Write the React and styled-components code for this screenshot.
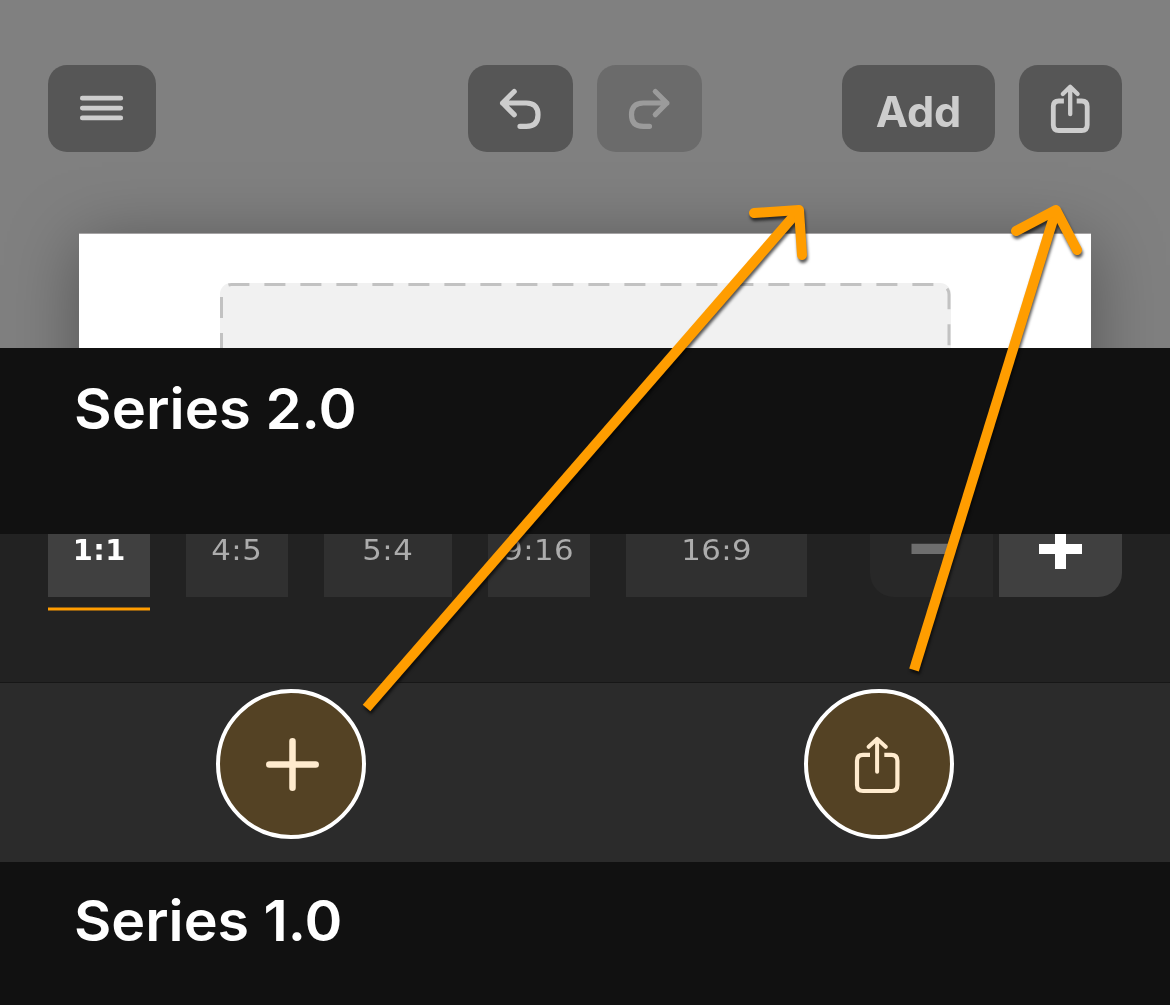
import React from "react";
import styled, { createGlobalStyle } from "styled-components";

const GlobalStyle = createGlobalStyle`
  * { box-sizing: border-box; }
  body { margin: 0; background: #111; }
  button { border: 0; padding: 0; margin: 0; }
`;

const Screen = styled.main`
  position: relative;
  display: flex;
  flex-direction: column;
  width: 1170px;
  height: 1005px;
  overflow: hidden;
  font-family: Inter, "Liberation Sans", sans-serif;
`;

const Editor = styled.section`
  display: flex;
  flex-direction: column;
  align-items: center;
  height: 348px;
  flex: none;
  overflow: hidden;
  padding-top: 65px;
  background: #808080;
`;

const Toolbar = styled.header`
  display: grid;
  grid-template-columns: 1fr auto 1fr;
  width: 100%;
  padding: 0 48px;
  margin-bottom: 81px;
`;

const Group = styled.div`
  display: flex;
  gap: 24px;
  justify-content: ${(p) => p.$align || "flex-start"};
`;

const ToolButton = styled.button`
  display: flex;
  align-items: center;
  justify-content: center;
  width: ${(p) => p.$width}px;
  height: 87px;
  border-radius: 19px;
  background: ${(p) => (p.disabled ? "#6b6b6b" : "#565656")};
  color: ${(p) => (p.disabled ? "#9b9b9b" : "#cdcdcd")};
  svg { display: block; }
`;

const AddLabel = styled.span`
  font: 700 42px/50px Inter, sans-serif;
  letter-spacing: -0.1px;
  padding-top: 7px;
  transform: scaleX(1.03);
`;

const Paper = styled.div`
  display: flex;
  justify-content: center;
  width: 1012px;
  height: 600px;
  flex: none;
  padding-top: 49px;
  border-top: 1px solid #a5a3a4;
  background: #fff;
  box-shadow: 0 9px 66px rgba(0, 0, 0, 0.35);
`;

const DropZone = styled.div`
  width: 731px;
  height: 300px;
  border-radius: 11px;
  background: #f1f1f1;
  svg { display: block; }
`;

const Caption = styled.h2`
  flex: none;
  height: ${(p) => p.$height}px;
  margin: 0;
  padding: ${(p) => p.$top}px 0 0 74px;
  background: #111;
  color: #fff;
  font: 600 56px/70px Inter, sans-serif;
`;

const CaptionText = styled.span`
  display: inline-block;
  transform: scaleX(${(p) => p.$stretch});
  transform-origin: left;
`;

const RatioBar = styled.section`
  display: flex;
  justify-content: space-between;
  height: 149px;
  flex: none;
  padding: 0 48px;
  border-bottom: 1px solid #171717;
  background: #222;
`;

const RatioList = styled.div`
  display: flex;
  gap: 36px;
`;

const RatioItem = styled.div`
  display: flex;
  flex-direction: column;
  gap: 10px;
  width: ${(p) => p.$width}px;
`;

const Ratio = styled.button`
  height: 63px;
  padding-bottom: 30px;
  background: ${(p) => (p.$active ? "#404040" : "#303030")};
  color: ${(p) => (p.$active ? "#fff" : "#acacac")};
  font: ${(p) => (p.$active ? 700 : 400)} 27.5px/33px "DejaVu Sans", sans-serif;
`;

const RatioLabel = styled.span`
  display: inline-block;
  letter-spacing: 0.4px;
  transform: scaleX(${(p) => (p.$active ? 1.05 : 1.12)});
`;

const Underline = styled.div`
  height: 4px;
  border: solid #915f12;
  border-width: 1px 0;
  background: #ff9d00;
`;

const Stepper = styled.div`
  display: flex;
  gap: 6px;
`;

const Step = styled.button`
  width: 123px;
  height: 63px;
  border-radius: ${(p) => (p.$right ? "0 0 24px 0" : "0 0 0 24px")};
  background: ${(p) => (p.$right ? "#404040" : "#282828")};
  color: ${(p) => (p.$right ? "#fff" : "#6e6e6e")};
  svg { display: block; }
`;

const Dock = styled.nav`
  display: flex;
  gap: 438px;
  height: 179px;
  flex: none;
  padding: 6px 216px 0;
  background: #2b2b2b;
`;

const RoundButton = styled.button`
  width: 150px;
  height: 150px;
  border: 4px solid #fff;
  border-radius: 50%;
  background: #544224;
  color: #ffebce;
  svg { display: block; }
`;

const Annotations = styled.svg`
  position: absolute;
  inset: 0;
  pointer-events: none;
  filter: drop-shadow(1px 3px 1.5px rgba(0, 0, 0, 0.65));
`;

const line = {
  fill: "none",
  stroke: "currentColor",
  strokeLinecap: "round",
  strokeLinejoin: "round",
};

const UndoIcon = () => (
  <svg width="105" height="87" {...line} strokeWidth="5.2">
    <path d="M46.2 26.5L34.6 38L46.2 49.7M34.6 38H58.2Q70 38.2 70 49.7Q70 61.3 58.2 61.3H52" />
  </svg>
);

const RedoIcon = () => (
  <svg width="105" height="87" {...line} strokeWidth="5.2">
    <path d="M58.3 26.5L69.9 38L58.3 49.7M69.9 38H46.3Q34.5 38.2 34.5 49.7Q34.5 61.3 46.3 61.3H52.5" />
  </svg>
);

const ratios = [
  ["1:1", 102],
  ["4:5", 102],
  ["5:4", 128],
  ["9:16", 102],
  ["16:9", 181],
];

const arrows = [
  { shaft: "M366.5 708L799 210", head: "M754 213L799 210L802 255" },
  { shaft: "M914 670L1056 210", head: "M1016 231L1056 210L1077 250" },
];

export default function App() {
  return (
    <Screen>
      <GlobalStyle />
      <Editor>
        <Toolbar>
          <Group>
            <ToolButton $width={108} aria-label="Menu">
              <svg width="108" height="87" {...line} strokeWidth="4.7">
                <path d="M34.3 33.2H72.8M34.3 43.1H72.8M34.3 52.9H72.8" />
              </svg>
            </ToolButton>
          </Group>
          <Group>
            <ToolButton $width={105} aria-label="Undo"><UndoIcon /></ToolButton>
            <ToolButton $width={105} disabled aria-label="Redo"><RedoIcon /></ToolButton>
          </Group>
          <Group $align="flex-end">
            <ToolButton $width={153}><AddLabel>Add</AddLabel></ToolButton>
            <ToolButton $width={103} aria-label="Share">
              <svg width="103" height="87" {...line} strokeWidth="4.8">
                <path strokeLinecap="butt" d="M44.9 36H39.8Q34.3 36 34.3 41.5V60Q34.3 65.5 39.8 65.5H62.7Q68.2 65.5 68.2 60V41.5Q68.2 36 62.7 36H57.7" />
                <path strokeWidth="4.3" d="M51.2 49.2V22.2M43.8 29L51.2 21.8L58.6 29" />
              </svg>
            </ToolButton>
          </Group>
        </Toolbar>
        <Paper>
          <DropZone>
            <svg width="731" height="65" fill="none" stroke="#c2c2c2" strokeWidth="3" strokeDasharray="21 15">
              <path d="M1.5 71V11.5A10 10 0 0 1 11.5 1.5H719A10 10 0 0 1 729 11.5V65" />
            </svg>
          </DropZone>
        </Paper>
      </Editor>
      <Caption $height={186} $top={25.5}>
        <CaptionText $stretch={1.035}>Series 2.0</CaptionText>
      </Caption>
      <RatioBar>
        <RatioList>
          {ratios.map(([label, width], i) => (
            <RatioItem key={label} $width={width}>
              <Ratio $active={i === 0}>
                <RatioLabel $active={i === 0}>{label}</RatioLabel>
              </Ratio>
              {i === 0 && <Underline />}
            </RatioItem>
          ))}
        </RatioList>
        <Stepper>
          <Step aria-label="Decrease">
            <svg width="123" height="63"><path fill="currentColor" d="M41.5 9.7H84V20H41.5Z" /></svg>
          </Step>
          <Step $right aria-label="Increase">
            <svg width="123" height="63"><path fill="currentColor" d="M40 10H56V0H67V10H83V20H67V35H56V20H40Z" /></svg>
          </Step>
        </Stepper>
      </RatioBar>
      <Dock>
        <RoundButton aria-label="Add item">
          <svg width="142" height="142" {...line} strokeWidth="6.5">
            <path d="M49.3 71.5H95.7M72.5 48.3V94.7" />
          </svg>
        </RoundButton>
        <RoundButton aria-label="Share">
          <svg width="142" height="142" {...line} strokeWidth="4.2">
            <path strokeLinecap="butt" d="M62 61.8H55Q49 61.8 49 67.8V92Q49 98 55 98H83.4Q89.4 98 89.4 92V67.8Q89.4 61.8 83.4 61.8H76.3" />
            <path strokeWidth="4" d="M69.1 78.8V46.5M60.7 53.8L69.1 45.9L77.7 53.8" />
          </svg>
        </RoundButton>
      </Dock>
      <Caption $height={143} $top={24}>
        <CaptionText $stretch={1.025}>Series 1.0</CaptionText>
      </Caption>
      <Annotations width="1170" height="1005" fill="none" stroke="#ff9d00" strokeWidth="10">
        {arrows.map((a) => (
          <g key={a.shaft}>
            <path d={a.shaft} />
            <path d={a.head} strokeLinecap="round" strokeLinejoin="round" />
          </g>
        ))}
      </Annotations>
    </Screen>
  );
}
